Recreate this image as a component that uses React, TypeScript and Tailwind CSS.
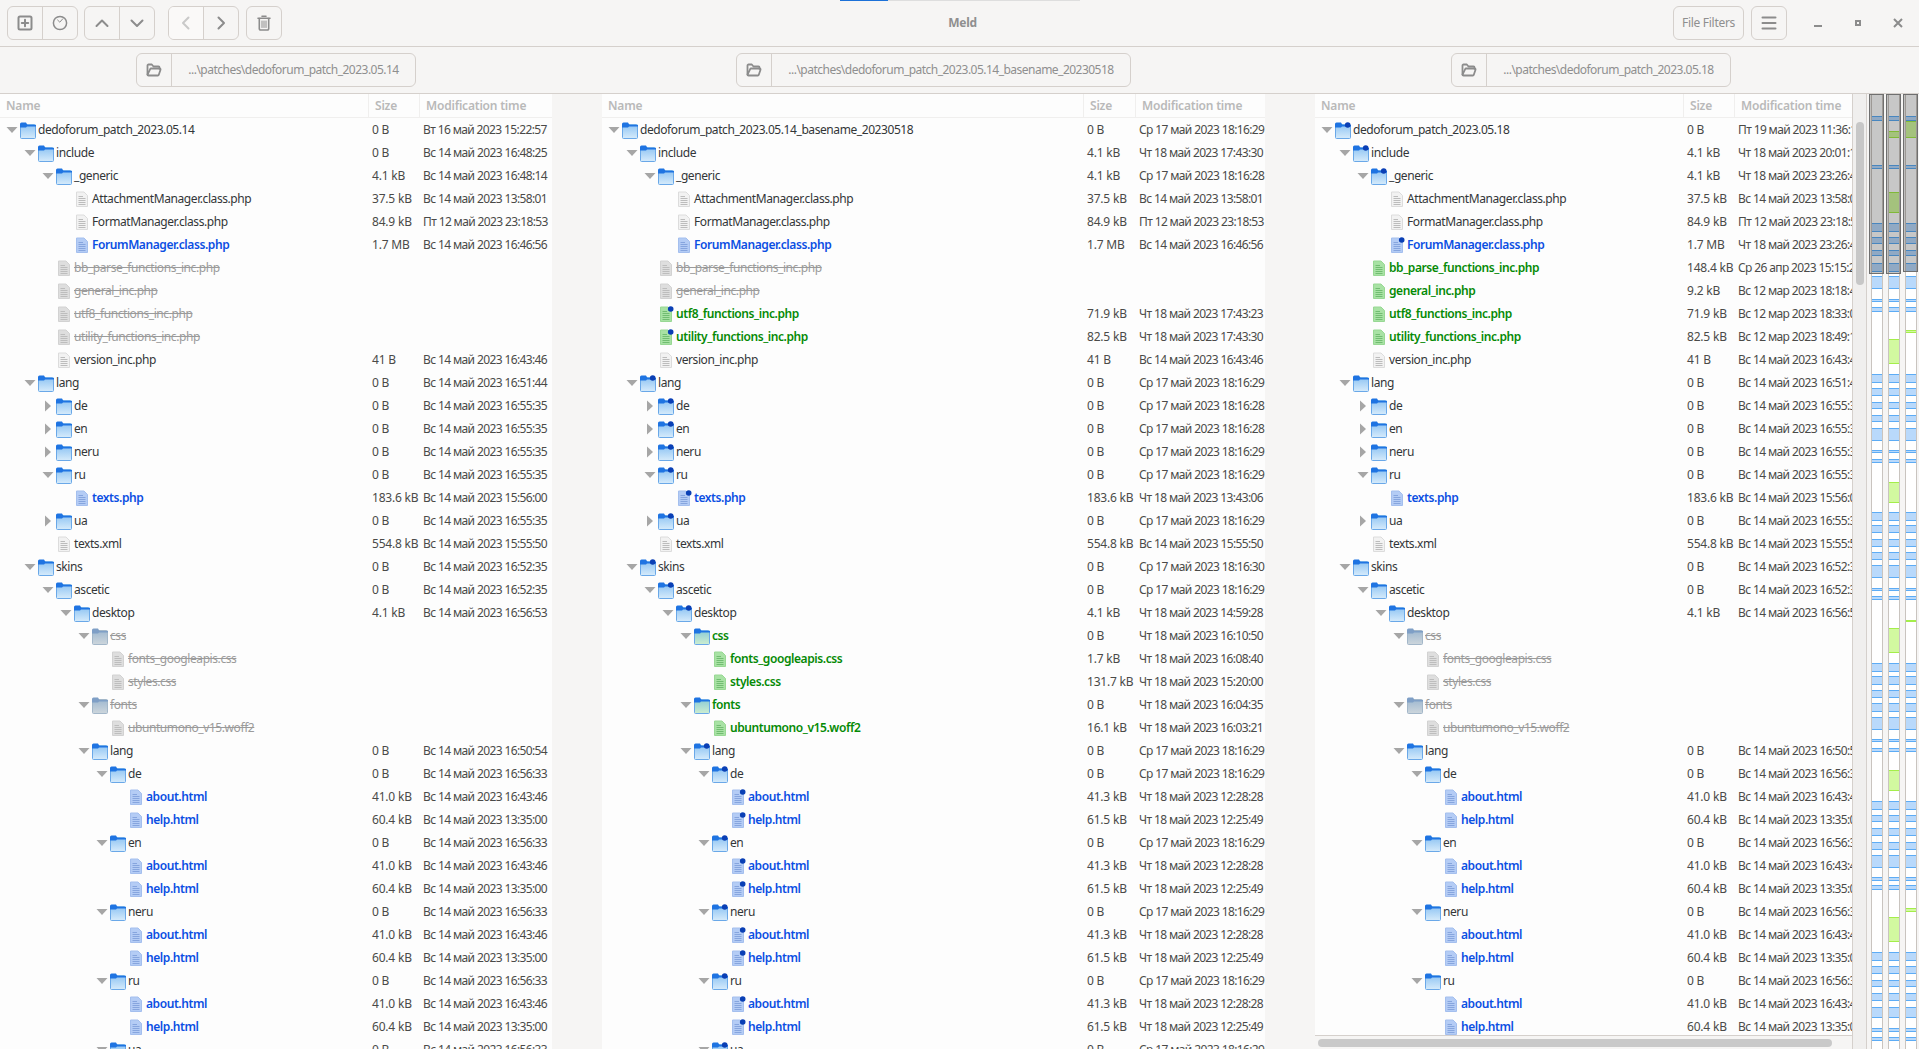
import type { ReactNode } from "react";

type Row = {
  d: number;
  name: string;
  type: "open" | "closed" | "file";
  state?: "missing" | "blue" | "green";
  size?: string;
  time?: string;
  dot?: boolean;
};

const sun = "Вс 14 май 2023 ";
const wed = "Ср 17 май 2023 ";
const thu = "Чт 18 май 2023 ";

const missing = (d: number, name: string, type: Row["type"] = "file"): Row => ({ d, name, type, state: "missing" });

const lang1 = (d: number, name: string): Row[] => [
  { d, name, type: "open", size: "0 B", time: sun + "16:56:33" },
  { d: d + 1, name: "about.html", type: "file", state: "blue", size: "41.0 kB", time: sun + "16:43:46" },
  { d: d + 1, name: "help.html", type: "file", state: "blue", size: "60.4 kB", time: sun + "13:35:00" },
];

const lang2 = (d: number, name: string): Row[] => [
  { d, name, type: "open", size: "0 B", time: wed + "18:16:29", dot: true },
  { d: d + 1, name: "about.html", type: "file", state: "blue", size: "41.3 kB", time: thu + "12:28:28", dot: true },
  { d: d + 1, name: "help.html", type: "file", state: "blue", size: "61.5 kB", time: thu + "12:25:49", dot: true },
];

// rows from version_inc.php down are the same in the left and right pane
const sharedTail: Row[] = [
  { d: 2, name: "version_inc.php", type: "file", size: "41 B", time: sun + "16:43:46" },
  { d: 1, name: "lang", type: "open", size: "0 B", time: sun + "16:51:44" },
  { d: 2, name: "de", type: "closed", size: "0 B", time: sun + "16:55:35" },
  { d: 2, name: "en", type: "closed", size: "0 B", time: sun + "16:55:35" },
  { d: 2, name: "neru", type: "closed", size: "0 B", time: sun + "16:55:35" },
  { d: 2, name: "ru", type: "open", size: "0 B", time: sun + "16:55:35" },
  { d: 3, name: "texts.php", type: "file", state: "blue", size: "183.6 kB", time: sun + "15:56:00" },
  { d: 2, name: "ua", type: "closed", size: "0 B", time: sun + "16:55:35" },
  { d: 2, name: "texts.xml", type: "file", size: "554.8 kB", time: sun + "15:55:50" },
  { d: 1, name: "skins", type: "open", size: "0 B", time: sun + "16:52:35" },
  { d: 2, name: "ascetic", type: "open", size: "0 B", time: sun + "16:52:35" },
  { d: 3, name: "desktop", type: "open", size: "4.1 kB", time: sun + "16:56:53" },
  missing(4, "css", "open"),
  missing(5, "fonts_googleapis.css"),
  missing(5, "styles.css"),
  missing(4, "fonts", "open"),
  missing(5, "ubuntumono_v15.woff2"),
  { d: 4, name: "lang", type: "open", size: "0 B", time: sun + "16:50:54" },
  ...lang1(5, "de"),
  ...lang1(5, "en"),
  ...lang1(5, "neru"),
  ...lang1(5, "ru"),
  { d: 5, name: "ua", type: "open", size: "0 B", time: sun + "16:56:33" },
];

const leftRows: Row[] = [
  { d: 0, name: "dedoforum_patch_2023.05.14", type: "open", size: "0 B", time: "Вт 16 май 2023 15:22:57" },
  { d: 1, name: "include", type: "open", size: "0 B", time: sun + "16:48:25" },
  { d: 2, name: "_generic", type: "open", size: "4.1 kB", time: sun + "16:48:14" },
  { d: 3, name: "AttachmentManager.class.php", type: "file", size: "37.5 kB", time: sun + "13:58:01" },
  { d: 3, name: "FormatManager.class.php", type: "file", size: "84.9 kB", time: "Пт 12 май 2023 23:18:53" },
  { d: 3, name: "ForumManager.class.php", type: "file", state: "blue", size: "1.7 MB", time: sun + "16:46:56" },
  missing(2, "bb_parse_functions_inc.php"),
  missing(2, "general_inc.php"),
  missing(2, "utf8_functions_inc.php"),
  missing(2, "utility_functions_inc.php"),
  ...sharedTail,
];

const middleRows: Row[] = [
  { d: 0, name: "dedoforum_patch_2023.05.14_basename_20230518", type: "open", size: "0 B", time: wed + "18:16:29" },
  { d: 1, name: "include", type: "open", size: "4.1 kB", time: thu + "17:43:30" },
  { d: 2, name: "_generic", type: "open", size: "4.1 kB", time: wed + "18:16:28" },
  { d: 3, name: "AttachmentManager.class.php", type: "file", size: "37.5 kB", time: sun + "13:58:01" },
  { d: 3, name: "FormatManager.class.php", type: "file", size: "84.9 kB", time: "Пт 12 май 2023 23:18:53" },
  { d: 3, name: "ForumManager.class.php", type: "file", state: "blue", size: "1.7 MB", time: sun + "16:46:56" },
  missing(2, "bb_parse_functions_inc.php"),
  missing(2, "general_inc.php"),
  { d: 2, name: "utf8_functions_inc.php", type: "file", state: "green", size: "71.9 kB", time: thu + "17:43:23", dot: true },
  { d: 2, name: "utility_functions_inc.php", type: "file", state: "green", size: "82.5 kB", time: thu + "17:43:30", dot: true },
  { d: 2, name: "version_inc.php", type: "file", size: "41 B", time: sun + "16:43:46" },
  { d: 1, name: "lang", type: "open", size: "0 B", time: wed + "18:16:29", dot: true },
  { d: 2, name: "de", type: "closed", size: "0 B", time: wed + "18:16:28", dot: true },
  { d: 2, name: "en", type: "closed", size: "0 B", time: wed + "18:16:28", dot: true },
  { d: 2, name: "neru", type: "closed", size: "0 B", time: wed + "18:16:29", dot: true },
  { d: 2, name: "ru", type: "open", size: "0 B", time: wed + "18:16:29", dot: true },
  { d: 3, name: "texts.php", type: "file", state: "blue", size: "183.6 kB", time: thu + "13:43:06", dot: true },
  { d: 2, name: "ua", type: "closed", size: "0 B", time: wed + "18:16:29", dot: true },
  { d: 2, name: "texts.xml", type: "file", size: "554.8 kB", time: sun + "15:55:50" },
  { d: 1, name: "skins", type: "open", size: "0 B", time: wed + "18:16:30", dot: true },
  { d: 2, name: "ascetic", type: "open", size: "0 B", time: wed + "18:16:29", dot: true },
  { d: 3, name: "desktop", type: "open", size: "4.1 kB", time: thu + "14:59:28", dot: true },
  { d: 4, name: "css", type: "open", state: "green", size: "0 B", time: thu + "16:10:50" },
  { d: 5, name: "fonts_googleapis.css", type: "file", state: "green", size: "1.7 kB", time: thu + "16:08:40" },
  { d: 5, name: "styles.css", type: "file", state: "green", size: "131.7 kB", time: thu + "15:20:00" },
  { d: 4, name: "fonts", type: "open", state: "green", size: "0 B", time: thu + "16:04:35" },
  { d: 5, name: "ubuntumono_v15.woff2", type: "file", state: "green", size: "16.1 kB", time: thu + "16:03:21" },
  { d: 4, name: "lang", type: "open", size: "0 B", time: wed + "18:16:29", dot: true },
  ...lang2(5, "de"),
  ...lang2(5, "en"),
  ...lang2(5, "neru"),
  ...lang2(5, "ru"),
  { d: 5, name: "ua", type: "open", size: "0 B", time: wed + "18:16:29", dot: true },
];

const rightRows: Row[] = [
  { d: 0, name: "dedoforum_patch_2023.05.18", type: "open", size: "0 B", time: "Пт 19 май 2023 11:36:12", dot: true },
  { d: 1, name: "include", type: "open", size: "4.1 kB", time: thu + "20:01:15", dot: true },
  { d: 2, name: "_generic", type: "open", size: "4.1 kB", time: thu + "23:26:41", dot: true },
  { d: 3, name: "AttachmentManager.class.php", type: "file", size: "37.5 kB", time: sun + "13:58:01" },
  { d: 3, name: "FormatManager.class.php", type: "file", size: "84.9 kB", time: "Пт 12 май 2023 23:18:53" },
  { d: 3, name: "ForumManager.class.php", type: "file", state: "blue", size: "1.7 MB", time: thu + "23:26:41", dot: true },
  { d: 2, name: "bb_parse_functions_inc.php", type: "file", state: "green", size: "148.4 kB", time: "Ср 26 апр 2023 15:15:20" },
  { d: 2, name: "general_inc.php", type: "file", state: "green", size: "9.2 kB", time: "Вс 12 мар 2023 18:18:40" },
  { d: 2, name: "utf8_functions_inc.php", type: "file", state: "green", size: "71.9 kB", time: "Вс 12 мар 2023 18:33:00" },
  { d: 2, name: "utility_functions_inc.php", type: "file", state: "green", size: "82.5 kB", time: "Вс 12 мар 2023 18:49:10" },
  ...sharedTail,
];

// diff map, y in page pixels
const blueChunks = [
  [116, 121], [165, 169], [223, 232], [237, 244], [250, 256], [263, 272], [276, 289], [299, 302], [307, 312],
  [374, 383], [388, 396], [402, 409], [415, 422], [428, 441], [450, 453], [459, 463], [512, 521], [525, 533],
  [539, 547], [552, 560], [565, 578], [588, 591], [596, 600], [663, 672], [676, 685], [690, 698], [703, 712],
  [717, 730], [739, 742], [748, 752], [801, 810], [815, 822], [828, 836], [842, 850], [855, 868], [877, 881],
  [885, 890], [952, 961], [966, 974], [980, 987], [993, 1001], [1007, 1018], [1028, 1032], [1037, 1041],
];
const greenChunks = [
  [],
  [[131, 138], [192, 213], [339, 364], [482, 503], [628, 653], [770, 791], [917, 942]],
  [[121, 138], [330, 333], [620, 622], [908, 912]],
];

function Chunk({ x, top, bottom, fill, line }: { x: number; top: number; bottom: number; fill: string; line: string }) {
  const y = top - 94;
  const h = bottom - top;
  return (
    <g>
      <rect x={x} y={y} width={10} height={h} fill={fill} />
      <rect x={x} y={y} width={10} height={1} fill={line} />
      <rect x={x} y={y + h - 1} width={10} height={1} fill={line} />
    </g>
  );
}

function DiffMap() {
  return (
    <svg width={52} height={955} viewBox="0 0 52 955" className="block">
      {[0, 1, 2].map((i) => {
        const x = 5 + i * 17;
        const thumbH = i === 2 ? 177 : 179;
        return (
          <g key={i}>
            <rect x={x - 0.5} y={0.5} width={11} height={955} fill="#ffffff" stroke="#c9c4bf" />
            {blueChunks.map(([a, b]) => (
              <Chunk key={a} x={x} top={a} bottom={b} fill="#b9d9fb" line="#5dacf5" />
            ))}
            {greenChunks[i].map(([a, b]) => (
              <Chunk key={a} x={x} top={a} bottom={b} fill="#d2f9a0" line="#a4ee4a" />
            ))}
            <rect x={x - 2.5} y={0.5} width={14} height={thumbH} fill="rgba(0,0,0,0.22)" stroke="#6f6f6f" />
          </g>
        );
      })}
    </svg>
  );
}

function Dot() {
  return <circle cx="12.7" cy="3" r="2.8" fill="#0a3fb5" />;
}

function FolderIcon({ state, dot, id }: { state?: Row["state"]; dot?: boolean; id: string }) {
  const top = state === "missing" ? "#7f9fc6" : "#1f74e2";
  const from = state === "missing" ? "#9fb8d0" : state === "green" ? "#8ccbd6" : "#8fc4f3";
  const to = state === "missing" ? "#cdd6dc" : state === "green" ? "#cdeed0" : "#d6ebfb";
  const edge = state === "missing" ? "#a3b7c9" : "#6aa8e8";
  return (
    <svg width="16" height="17" viewBox="0 0 16 17" className="block">
      <defs>
        <linearGradient id={id} x1="0" y1="0" x2="0" y2="1">
          <stop offset="0" stopColor={from} />
          <stop offset="1" stopColor={to} />
        </linearGradient>
      </defs>
      <rect x="0.5" y="2.5" width="15" height="14" rx="1" fill={`url(#${id})`} stroke={edge} />
      <path d="M0 2a1.500 1.500 0 0 1 1.500-1.500H6L7.500 3H16V4.500H7L6 5.500H0z" fill={top} />
      {dot && <Dot />}
    </svg>
  );
}

function FileIcon({ state, dot }: { state?: Row["state"]; dot?: boolean }) {
  const fill = state === "blue" ? "#b4ccf5" : state === "green" ? "#a8e2a4" : state === "missing" ? "#dedede" : "#f2f2f2";
  const line = state === "blue" ? "#86a5de" : state === "green" ? "#71bd71" : state === "missing" ? "#bdbdbd" : "#bcbcbc";
  const edge = state === "blue" ? "#a4bfee" : state === "green" ? "#98d894" : state === "missing" ? "#d2d2d2" : "#dcdcdc";
  return (
    <svg width="16" height="16" viewBox="0 0 16 16" className="block">
      <path d="M2.500 1H10l3.500 3.500V15.500H2.500z" fill={fill} stroke={edge} />
      <path d="M4.500 5.500H9M4.500 7.500H11.500M4.500 9.500H11.500M4.500 11.500H11.500M4.500 13.500H11.500" stroke={line} strokeWidth="1" />
      {dot && <Dot />}
    </svg>
  );
}

function Expander({ type }: { type: Row["type"] }) {
  if (type === "file") return <span className="w-[16px] shrink-0" />;
  return (
    <span className="flex w-[16px] shrink-0 justify-center">
      <svg width="12" height="12" viewBox="0 0 12 12" className="block">
        {type === "open" ? <path d="M0.500 3h11L6 9z" fill="#a6a6a6" /> : <path d="M3 0.500v11L9 6z" fill="#a6a6a6" />}
      </svg>
    </span>
  );
}

const nameColor = {
  missing: "text-[#9b9b9b] line-through",
  blue: "text-[#0b4fe3] font-semibold",
  green: "text-[#058a05] font-semibold",
};

function TreeRow({ row, cols, id }: { row: Row; cols: string; id: string }) {
  const color = row.state ? nameColor[row.state] : "text-[#333638]";
  return (
    <div className={`grid h-[23px] shrink-0 items-center pt-px ${cols}`}>
      <div className="flex min-w-0 items-center" style={{ paddingLeft: 4 + row.d * 18 }}>
        <Expander type={row.type} />
        <span className="w-[18px] shrink-0">
          {row.type === "file" ? (
            <FileIcon state={row.state} dot={row.dot} />
          ) : (
            <FolderIcon state={row.state} dot={row.dot} id={id} />
          )}
        </span>
        <span className={`whitespace-nowrap tracking-[-0.42px] ${color}`}>{row.name}</span>
      </div>
      <div className="overflow-hidden whitespace-nowrap pl-[4px] text-[#4a4a48]">{row.size}</div>
      <div className="overflow-hidden whitespace-nowrap pl-[4px] tracking-[-0.62px] text-[#4a4a48]">{row.time}</div>
    </div>
  );
}

function Tree({ rows, cols, prefix }: { rows: Row[]; cols: string; prefix: string }) {
  return (
    <div className="flex min-h-0 flex-1 flex-col overflow-hidden bg-[#fdfdfd] text-[12px] tracking-[-0.2px]">
      <div className={`grid h-[24px] shrink-0 border-b border-[#f0efee] font-semibold text-[#b9b9b9] ${cols}`}>
        <div className="flex items-center pl-[6px]">Name</div>
        <div className="flex items-center border-l border-[#f0efee] pl-[6px]">Size</div>
        <div className="flex items-center overflow-hidden whitespace-nowrap border-l border-[#f0efee] pl-[6px]">Modification time</div>
      </div>
      {rows.map((row, i) => (
        <TreeRow key={i} row={row} cols={cols} id={`${prefix}-${i}`} />
      ))}
    </div>
  );
}

function Gutter() {
  return <div className="bg-[#f6f5f4]" />;
}

function Btn({ children, last, faded }: { children: ReactNode; last?: boolean; faded?: boolean }) {
  return (
    <div
      className={`flex h-full items-center justify-center ${last ? "w-[34px]" : "w-[35px] border-r border-[#d5d0cc]"} ${
        faded ? "bg-[#faf9f8] text-[#c9c9c9]" : "text-[#8c8c8c]"
      }`}
    >
      {children}
    </div>
  );
}

function Group({ children }: { children: ReactNode }) {
  return <div className="flex h-[34px] overflow-hidden rounded-[6px] border border-[#d5d0cc]">{children}</div>;
}

function Icon({ children, stroke = 2 }: { children: ReactNode; stroke?: number }) {
  return (
    <svg width="16" height="16" viewBox="0 0 16 16" fill="none" stroke="currentColor" strokeWidth={stroke} strokeLinecap="round" strokeLinejoin="round">
      {children}
    </svg>
  );
}

function Toolbar() {
  return (
    <div className="flex h-[47px] shrink-0 items-center border-b border-[#d5d0cc] text-[12px]">
      <div className="flex flex-1 items-center pl-[7px]">
        <Group>
          <Btn>
            <Icon>
              <rect x="1.500" y="1.500" width="13" height="13" rx="1.500" />
              <path d="M8 4.800v6.400M4.800 8h6.400" />
            </Icon>
          </Btn>
          <Btn last>
            <Icon stroke={1.5}>
              <circle cx="8" cy="8" r="6.600" />
              <path d="M5.600 5l2.200 2.200L10.800 3.800" strokeWidth="1" />
            </Icon>
          </Btn>
        </Group>
        <div className="ml-[6px]">
          <Group>
            <Btn>
              <Icon>
                <path d="M2.500 11l5.500-5.500 5.500 5.500" />
              </Icon>
            </Btn>
            <Btn last>
              <Icon>
                <path d="M2.500 5.500L8 11l5.500-5.500" />
              </Icon>
            </Btn>
          </Group>
        </div>
        <div className="ml-[13px]">
          <Group>
            <Btn faded>
              <Icon>
                <path d="M10.500 2.500L5 8l5.500 5.500" />
              </Icon>
            </Btn>
            <Btn last>
              <Icon>
                <path d="M5.500 2.500L11 8l-5.500 5.500" />
              </Icon>
            </Btn>
          </Group>
        </div>
        <div className="ml-[7px]">
          <Group>
            <Btn last>
              <Icon stroke={1.6}>
                <path d="M6 1.200h4M2 3.200h12" />
                <path d="M3.300 3.500v10.300a1.200 1.200 0 0 0 1.200 1.200h7a1.200 1.200 0 0 0 1.200-1.200V3.500" />
                <path d="M6 6v6.500M8 6v6.500M10 6v6.500" strokeWidth="1" />
              </Icon>
            </Btn>
          </Group>
        </div>
      </div>
      <div className="font-bold tracking-[-0.3px] text-[#8f8f8f]">Meld</div>
      <div className="flex flex-1 items-center justify-end pr-[1px]">
        <div className="flex h-[34px] w-[71px] items-center justify-center rounded-[6px] border border-[#d5d0cc] tracking-[-0.3px] text-[#8f8f8f]">
          File Filters
        </div>
        <div className="ml-[7px] mr-[11px]">
          <Group>
            <Btn last>
              <Icon>
                <path d="M1.500 2.500h13M1.500 8h13M1.500 13.500h13" />
              </Icon>
            </Btn>
          </Group>
        </div>
        <div className="flex h-[34px] w-[40px] items-center justify-center text-[#8c8c8c]">
          <span className="mt-[5px] h-[2px] w-[8px] bg-current" />
        </div>
        <div className="flex h-[34px] w-[40px] items-center justify-center text-[#8c8c8c]">
          <span className="h-[6px] w-[6px] border-2 border-current" />
        </div>
        <div className="flex h-[34px] w-[40px] items-center justify-center text-[#8c8c8c]">
          <svg width="10" height="10" viewBox="0 0 10 10" stroke="currentColor" strokeWidth="2">
            <path d="M1 1l8 8M9 1l-8 8" />
          </svg>
        </div>
      </div>
    </div>
  );
}

function PathBox({ path }: { path: string }) {
  return (
    <div className="flex items-center justify-center">
      <div className="flex h-[34px] overflow-hidden rounded-[6px] border border-[#d5d0cc]">
        <div className="flex w-[35px] items-center justify-center border-r border-[#d5d0cc] text-[#8c8c8c]">
          <Icon stroke={1.8}>
            <path d="M1.500 12.500V3.500a1 1 0 0 1 1-1h3.300l1.700 2h5a1 1 0 0 1 1 1v1.300" />
            <path d="M1.500 12.500a1 1 0 0 0 1 1h9.300a1 1 0 0 0 1-.7l1.700-5a1 1 0 0 0-1-1.300H5.200a1 1 0 0 0-1 .7z" />
          </Icon>
        </div>
        <div className="flex items-center whitespace-nowrap px-[16px] text-[12px] tracking-[-0.52px] text-[#8f8f8f]">{path}</div>
      </div>
    </div>
  );
}

const columns = "grid-cols-[552px_50px_663px_50px_552px_52px]";

export default function App() {
  return (
    <div className="relative flex h-[1049px] w-[1919px] flex-col overflow-hidden bg-[#f6f5f4] font-['Noto_Sans',sans-serif]">
      {/* progress line on the top edge */}
      <div className="absolute left-[840px] top-0 h-px w-[48px] bg-[#1c71d8]" />
      <div className="absolute left-[888px] top-0 h-px w-[192px] bg-[#dedede]" />

      <Toolbar />

      <div className={`grid h-[47px] shrink-0 border-b border-[#d5d0cc] ${columns}`}>
        <PathBox path="...\patches\dedoforum_patch_2023.05.14" />
        <div />
        <PathBox path="...\patches\dedoforum_patch_2023.05.14_basename_20230518" />
        <div />
        <PathBox path="...\patches\dedoforum_patch_2023.05.18" />
        <div />
      </div>

      <div className={`grid min-h-0 flex-1 ${columns}`}>
        <div className="flex min-h-0 min-w-0 flex-col">
          <Tree rows={leftRows} cols="grid-cols-[368px_51px_133px]" prefix="l" />
        </div>
        <Gutter />
        <div className="flex min-h-0 min-w-0 flex-col">
          <Tree rows={middleRows} cols="grid-cols-[481px_52px_130px]" prefix="m" />
        </div>
        <Gutter />
        <div className="flex min-h-0 min-w-0">
          <div className="flex min-h-0 w-[537px] shrink-0 flex-col">
            <Tree rows={rightRows} cols="grid-cols-[368px_51px_118px]" prefix="r" />
            <div className="h-[14px] shrink-0 border-t border-[#d5d0cc] bg-[#f6f5f4] pl-[3px] pt-[3px]">
              <div className="h-[8px] w-[514px] rounded-full bg-[#c9c9c9]" />
            </div>
          </div>
          <div className="flex w-[15px] shrink-0 flex-col border-x border-[#d5d0cc] bg-[#f0efee]">
            <div className="mx-auto mt-[28px] h-[163px] w-[8px] rounded-full bg-[#c7c7c7]" />
          </div>
        </div>
        <div className="overflow-hidden">
          <DiffMap />
        </div>
      </div>
    </div>
  );
}
